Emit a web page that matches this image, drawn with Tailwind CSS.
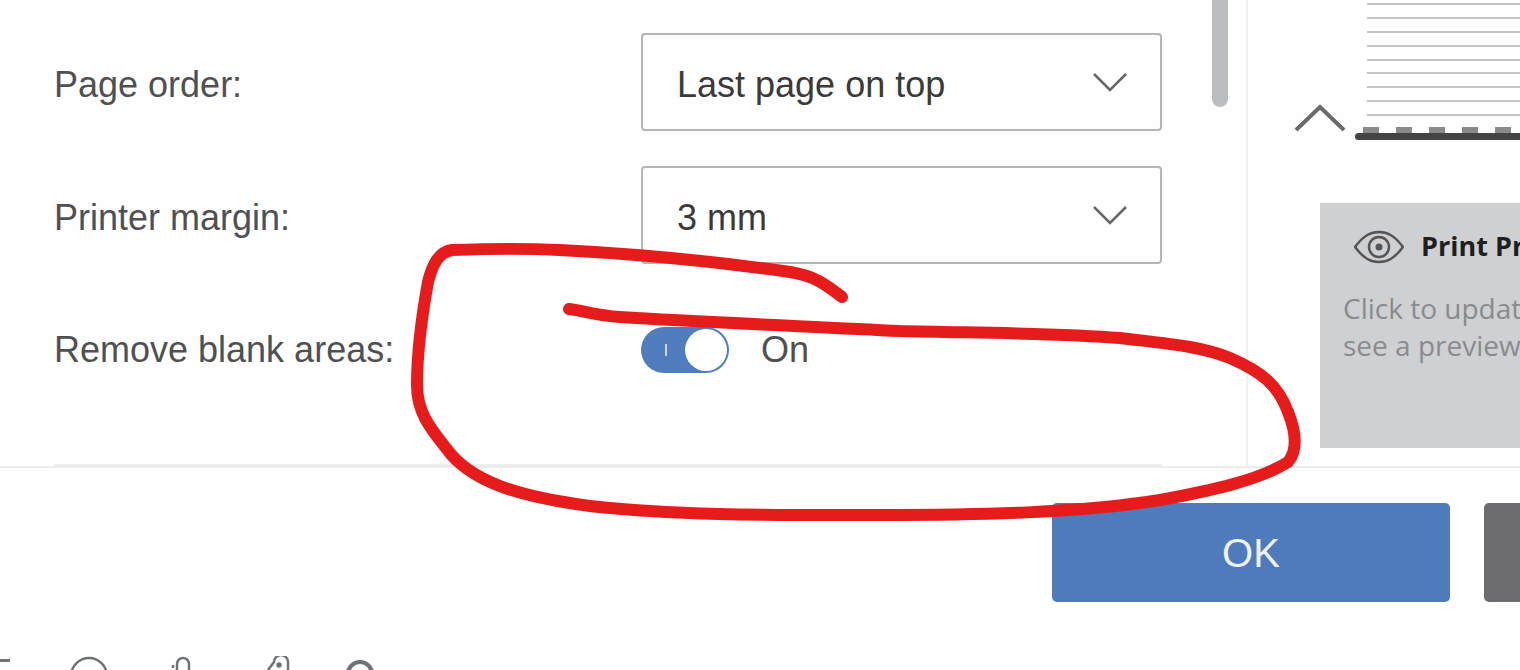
<!doctype html>
<html>
  <head>
    <meta charset="UTF-8" />
    <script src="https://cdn.jsdelivr.net/npm/@tailwindcss/browser@4"></script>
    <title>Print settings</title>
  </head>
  <body class="bg-white">
    <div class="relative w-[1520px] h-[670px] overflow-hidden bg-white font-['Liberation_Sans',sans-serif]">
      <div class="blur-[0.7px]">
        <!-- dialog body -->
        <div class="flex h-[468px] border-b-2 border-[#ececec] bg-[#fefefe]">
          <div class="w-[1248px] h-[466px] shrink-0 border-r-2 border-[#f0f0f0] flex">
            <div class="w-[1108px] ml-[54px] h-[466px] border-b-2 border-[#eeeeee] pt-[33px] shrink-0">
              <div class="flex items-center h-[98px]">
                <label class="w-[587px] pt-[6px] text-[36px] text-[#505050]">Page order:</label>
                <div class="w-[521px] h-[98px] flex items-center justify-between pl-[34px] pr-[32px] border-2 border-[#b5b5b5] rounded-[4px] text-[36px] text-[#3a3a3a]">
                  <span class="pt-[5px]">Last page on top</span>
                  <svg width="36" height="22" viewBox="0 0 36 22" fill="none" stroke="#666" stroke-width="2.5"><path d="M2 3 L18 19 L34 3" /></svg>
                </div>
              </div>
              <div class="flex items-center h-[98px] mt-[35px]">
                <label class="w-[587px] pt-[6px] text-[36px] text-[#505050]">Printer margin:</label>
                <div class="w-[521px] h-[98px] flex items-center justify-between pl-[34px] pr-[32px] border-2 border-[#b5b5b5] rounded-[4px] text-[36px] text-[#3a3a3a]">
                  <span class="pt-[5px]">3 mm</span>
                  <svg width="36" height="22" viewBox="0 0 36 22" fill="none" stroke="#666" stroke-width="2.5"><path d="M2 3 L18 19 L34 3" /></svg>
                </div>
              </div>
              <div class="flex items-center h-[46px] mt-[63px]">
                <label class="w-[587px] text-[36px] text-[#505050]">Remove blank areas:</label>
                <div class="relative w-[88px] h-[46px] rounded-full bg-[#4f7dbd] flex items-center justify-end pr-[2px] shrink-0">
                  <span class="absolute left-[24px] top-[17px] w-[2px] h-[12px] bg-[#c9d8ee]"></span>
                  <span class="w-[42px] h-[42px] rounded-full bg-white"></span>
                </div>
                <span class="ml-[32px] text-[36px] text-[#505050]">On</span>
              </div>
            </div>
            <div class="ml-[50px] w-[16px] h-[107px] rounded-b-full bg-[#bcbdc0] shrink-0"></div>
          </div>

          <!-- preview column -->
          <div class="flex-1 min-w-0 overflow-hidden">
            <div class="flex items-end h-[140px] ml-[46px]">
              <svg class="mb-[8px] shrink-0" width="52" height="28" viewBox="0 0 52 28" fill="none" stroke="#6a6a6a" stroke-width="4"><path d="M2 26 L26 3 L50 26" /></svg>
              <div class="ml-[9px] w-[260px] shrink-0">
                <div class="pl-[12px] flex flex-col gap-[11.85px] bg-white">
                  <div class="h-[2px] bg-[#c4c4c4]"></div>
                  <div class="h-[2px] bg-[#c4c4c4]"></div>
                  <div class="h-[2px] bg-[#c4c4c4]"></div>
                  <div class="h-[2px] bg-[#c4c4c4]"></div>
                  <div class="h-[2px] bg-[#c4c4c4]"></div>
                  <div class="h-[2px] bg-[#c4c4c4]"></div>
                  <div class="h-[2px] bg-[#c4c4c4]"></div>
                  <div class="h-[2px] bg-[#c4c4c4]"></div>
                  <div class="h-[2px] bg-[#c4c4c4]"></div>
                </div>
                <div class="flex gap-[17px] pl-[8px] mt-[11px] h-[6px]">
                  <div class="w-[16px] bg-[#8a8a8a]"></div>
                  <div class="w-[16px] bg-[#8a8a8a]"></div>
                  <div class="w-[16px] bg-[#8a8a8a]"></div>
                  <div class="w-[16px] bg-[#8a8a8a]"></div>
                  <div class="w-[16px] bg-[#8a8a8a]"></div>
                </div>
                <div class="h-[7px] rounded-l-full bg-[#444444]"></div>
              </div>
            </div>
            <div class="ml-[72px] mt-[63px] w-[400px] h-[245px] bg-[#cfd0d2] pl-[23px] pt-[26px]">
              <div class="flex items-center pl-[11px] h-[36px]">
                <svg class="shrink-0" width="50" height="34" viewBox="0 0 50 34" fill="none" stroke="#555" stroke-width="2.5">
                  <path d="M1 17 C10 5 17 2 25 2 C33 2 40 5 49 17 C40 29 33 32 25 32 C17 32 10 29 1 17 Z" />
                  <circle cx="25" cy="17" r="10" />
                  <circle cx="25" cy="17" r="3.5" fill="#555" stroke="none" />
                </svg>
                <span class="ml-[17px] -mt-[2px] whitespace-nowrap font-['Open_Sans',sans-serif] font-bold text-[27px] text-[#1f1f1f]">Print Preview</span>
              </div>
              <p class="mt-[25px] w-[400px] font-['Open_Sans',sans-serif] text-[28px] leading-[37px] text-[#8a8b8e] whitespace-nowrap">Click to update and<br />see a preview</p>
            </div>
          </div>
        </div>

        <!-- dialog footer -->
        <div class="flex h-[159px] pt-[35px] pl-[1052px] gap-[34px] bg-[#fefefe]">
          <div class="w-[398px] h-[99px] shrink-0 rounded-[5px] bg-[#4f7bbd] flex items-center justify-center text-[40px] text-[#eef3fa]">OK</div>
          <div class="w-[398px] h-[99px] shrink-0 rounded-[5px] bg-[#6d6d6f]"></div>
        </div>

        <!-- toolbar, cut off by the bottom edge -->
        <div class="flex items-start pt-[32px] h-[43px]">
          <svg class="shrink-0" width="12" height="4" viewBox="0 0 12 4"><rect width="10" height="3" fill="#6f7377" /></svg>
          <svg class="ml-[57px] -mt-[3px] shrink-0" width="40" height="40" viewBox="0 0 40 40" fill="none" stroke="#6f7377" stroke-width="2.5"><circle cx="20" cy="20" r="18" /></svg>
          <svg class="ml-[61px] -mt-[3px] shrink-0" width="24" height="40" viewBox="0 0 24 40" fill="none" stroke="#6f7377" stroke-width="2.5"><path d="M3 12 V9 M7 30 V8 A6 6 0 0 1 19 8 V30" /></svg>
          <svg class="ml-[72px] -mt-[3px] shrink-0" width="28" height="40" viewBox="0 0 28 40" fill="none" stroke="#6f7377" stroke-width="2.5"><path d="M2 14 L8 6 A7 7 0 0 1 22 6 V30" /><circle cx="13" cy="9" r="1.5" fill="#6f7377" /></svg>
          <svg class="ml-[50px] -mt-[1px] shrink-0" width="32" height="40" viewBox="0 0 32 40" fill="none" stroke="#6f7377" stroke-width="4"><circle cx="16" cy="16" r="12" /></svg>
        </div>
      </div>

      <!-- hand drawn red marker over the screenshot -->
      <svg class="absolute left-0 top-0" width="1520" height="670" viewBox="0 0 1520 670" fill="none" stroke="#e61c1c" stroke-width="12" stroke-linecap="round" stroke-linejoin="round">
        <path d="M842 297 C825 284 815 276 790 272 C720 262 640 254 560 250 C520 248 480 249 452 250 C438 252 432 266 428 282 C422 315 417 350 417 385 C417 412 430 428 446 448 C470 482 520 497 590 506 C680 516 780 515 880 515 C980 515 1080 513 1160 500 C1210 491 1260 480 1288 462 C1298 450 1296 432 1288 412 C1278 385 1262 372 1230 358 C1200 346 1170 344 1120 338 C1060 333 980 333 900 331 C800 326 700 322 620 317 C595 315 585 311 569 309" />
      </svg>
    </div>
  </body>
</html>
